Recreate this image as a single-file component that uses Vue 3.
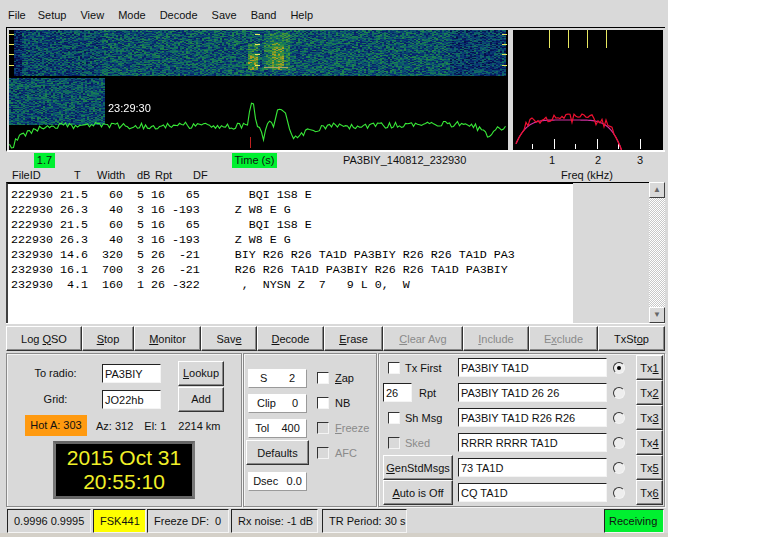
<template>
  <div class="win">
    <div class="menu">
      <span v-for="m in menus" :key="m">{{ m }}</span>
    </div>

    <div class="graphs">
      <div class="wf-wrap">
        <canvas ref="wfRef" width="499" height="120"></canvas>
        <span class="stamp">23:29:30</span>
      </div>
      <canvas ref="specRef" width="150" height="120"></canvas>
    </div>

    <div class="scale-row">
      <span class="green val">1.7</span>
      <span class="green time">Time (s)</span>
      <span class="fname">PA3BIY_140812_232930</span>
      <span class="tick t1">1</span>
      <span class="tick t2">2</span>
      <span class="tick t3">3</span>
    </div>
    <div class="head-row">
      <span style="width:62px">FileID</span>
      <span style="width:23px">T</span>
      <span style="width:40px">Width</span>
      <span style="width:18px">dB</span>
      <span style="width:38px">Rpt</span>
      <span style="width:368px">DF</span>
      <span>Freq (kHz)</span>
    </div>

    <div class="log-row">
      <pre class="log">{{ log }}</pre>
      <div class="log-gap"></div>
      <div class="scroll">
        <div class="sbtn">▲</div>
        <div class="strack"></div>
        <div class="sbtn dim">▼</div>
      </div>
    </div>

    <div class="cmd-row">
      <button v-for="b in commands" :key="b.t" class="btn" :class="{ off: b.off }" :style="{ width: b.w + 'px' }">
        {{ b.t.slice(0, b.u) }}<u>{{ b.t[b.u] }}</u>{{ b.t.slice(b.u + 1) }}
      </button>
    </div>

    <div class="panels">
      <div class="panel p-left">
        <div class="call-grid">
          <label>To radio:</label>
          <div class="field">PA3BIY</div>
          <button class="btn"><u>L</u>ookup</button>
          <label>Grid:</label>
          <div class="field">JO22hb</div>
          <button class="btn">Add</button>
        </div>
        <div class="info">
          <span class="hot">Hot A: 303</span>
          <span class="az">Az: 312</span>
          <span class="el">El: 1</span>
          <span>2214 km</span>
        </div>
        <div class="clock">
          <div>2015 Oct 31</div>
          <div>20:55:10</div>
        </div>
      </div>

      <div class="panel p-mid">
        <div class="mid-col">
          <div class="spin"><span>S</span><span>2</span></div>
          <div class="spin"><span>Clip</span><span>0</span></div>
          <div class="spin"><span>Tol</span><span>400</span></div>
          <button class="btn defaults">Defaults</button>
          <div class="spin dsec"><span>Dsec</span><span>0.0</span></div>
        </div>
        <div class="checks">
          <div class="chk-row"><i class="chk"></i><span><u>Z</u>ap</span></div>
          <div class="chk-row"><i class="chk"></i><span>NB</span></div>
          <div class="chk-row off"><i class="chk"></i><span><u>F</u>reeze</span></div>
          <div class="chk-row off"><i class="chk"></i><span>AFC</span></div>
        </div>
      </div>

      <div class="panel p-right">
        <div class="tx-left">
          <div class="chk-row rowc"><i class="chk"></i><span>Tx First</span></div>
          <div class="rpt"><div class="field small">26</div><span>Rpt</span></div>
          <div class="chk-row rowc"><i class="chk"></i><span>Sh Msg</span></div>
          <div class="chk-row rowc off"><i class="chk"></i><span>Sked</span></div>
          <button class="btn wide"><u>G</u>enStdMsgs</button>
          <button class="btn wide"><u>A</u>uto is Off</button>
        </div>
        <div class="tx-msgs">
          <div v-for="(m, i) in messages" :key="i" class="tx-row">
            <div class="field msg">{{ m }}</div>
            <i class="radio" :class="{ on: i === 0 }"></i>
            <button class="btn txb">Tx<u>{{ i + 1 }}</u></button>
          </div>
        </div>
      </div>
    </div>

    <div class="status">
      <div class="cell" style="width:84px">0.9996 0.9995</div>
      <div class="cell fsk" style="width:53px">FSK441</div>
      <div class="cell freeze" style="width:82px"><span>Freeze DF:</span><span>0</span></div>
      <div class="cell" style="width:87px">Rx noise: -1 dB</div>
      <div class="cell tr" style="width:85px">TR Period: 30 s</div>
      <div class="cell rx">Receiving</div>
    </div>
  </div>
</template>

<script setup>
import { ref, onMounted } from 'vue'

const menus = ['File', 'Setup', 'View', 'Mode', 'Decode', 'Save', 'Band', 'Help']

const commands = [
  { t: 'Log QSO', u: 4, w: 76 },
  { t: 'Stop', u: 0, w: 52 },
  { t: 'Monitor', u: 0, w: 67 },
  { t: 'Save', u: 3, w: 56 },
  { t: 'Decode', u: 0, w: 67 },
  { t: 'Erase', u: 0, w: 59 },
  { t: 'Clear Avg', u: 0, w: 80, off: true },
  { t: 'Include', u: 0, w: 66, off: true },
  { t: 'Exclude', u: 1, w: 69, off: true },
  { t: 'TxStop', u: 4, w: 67 }
]

const messages = [
  'PA3BIY TA1D',
  'PA3BIY TA1D 26 26',
  'PA3BIY TA1D R26 R26',
  'RRRR RRRR TA1D',
  '73 TA1D',
  'CQ TA1D'
]

const log = [
  '222930 21.5   60  5 16   65       BQI 1S8 E',
  '222930 26.3   40  3 16 -193     Z W8 E G',
  '222930 21.5   60  5 16   65       BQI 1S8 E',
  '222930 26.3   40  3 16 -193     Z W8 E G',
  '232930 14.6  320  5 26  -21     BIY R26 R26 TA1D PA3BIY R26 R26 TA1D PA3',
  '232930 16.1  700  3 26  -21     R26 R26 TA1D PA3BIY R26 R26 TA1D PA3BIY',
  '232930  4.1  160  1 26 -322      ,  NYSN Z  7   9 L 0,  W'
].join('\n')

const wfRef = ref(null)
const specRef = ref(null)

// fixed seed so the noise comes out the same on every load
let seed = 4711
function rnd() {
  seed = (seed * 1664525 + 1013904223) % 4294967296
  return seed / 4294967296
}

function heat(v) {
  const stops = [
    [6, 12, 70], [8, 40, 115], [12, 90, 110], [25, 130, 80],
    [80, 150, 50], [185, 160, 30], [225, 110, 20]
  ]
  const p = Math.max(0, Math.min(0.999, v)) * (stops.length - 1)
  const i = Math.floor(p)
  const f = p - i
  const c = stops[i].map((s, k) => Math.round(s + (stops[i + 1][k] - s) * f))
  return `rgb(${c[0]},${c[1]},${c[2]})`
}

function noiseBlock(ctx, x0, y0, w, h, level) {
  for (let y = 0; y < h; y++) {
    for (let x = 0; x < w; x += 2) {
      ctx.fillStyle = heat(level(x0 + x, y0 + y) + (rnd() - 0.5) * 0.44)
      ctx.fillRect(x0 + x, y0 + y, 2, 1)
    }
  }
}

// smooth envelope points of the green trace, in canvas coordinates
const traceKeys = [
  [0, 116], [4, 116], [6, 110], [11, 106], [21, 102], [33, 97], [51, 95], [71, 96], [91, 94],
  [111, 96], [131, 96], [151, 96], [171, 95], [191, 96], [211, 97], [231, 96], [238, 95],
  [239, 90], [241, 73], [244, 74], [247, 96], [251, 98], [254, 110], [257, 95], [261, 90],
  [264, 97], [268, 80], [271, 79], [276, 83], [279, 95], [282, 107], [290, 105], [300, 100],
  [320, 96], [360, 96], [400, 95], [450, 94], [466, 96], [478, 106], [484, 101], [496, 97]
]

function waterfallLevel(x, y) {
  let v = 0.32
  if (x < 12) v = 0.12
  else if (x < 90) v = 0.27
  if (x > 440) v = 0.22
  if (x > 238 && x < 248 && y > 12 && y < 40) v = y > 24 ? 0.66 : 0.48
  if (x > 254 && x < 280 && y > 2 && y < 40) v = x > 262 && x < 274 && y > 12 ? 0.62 : 0.46
  return v
}

function drawWaterfall(ctx) {
  ctx.fillStyle = '#000'
  ctx.fillRect(0, 0, 499, 120)

  noiseBlock(ctx, 5, 0, 491, 46, waterfallLevel)
  noiseBlock(ctx, 0, 48, 96, 47, () => 0.3)

  // yellow tick marks on the left, centre and right
  ctx.fillStyle = '#e8e860'
  for (const y of [4, 14, 24, 35]) {
    ctx.fillRect(0, y, 5, 1)
    ctx.fillRect(246, y, 5, 1)
    ctx.fillRect(493, y, 5, 1)
  }
  ctx.fillStyle = '#b0a060'
  ctx.fillRect(255, 37, 24, 1)

  ctx.strokeStyle = '#38e838'
  ctx.lineWidth = 1.1
  ctx.beginPath()
  let k = 0
  for (let x = 0; x < 497; x += 2) {
    while (k < traceKeys.length - 2 && traceKeys[k + 1][0] < x) k++
    const a = traceKeys[k]
    const b = traceKeys[k + 1]
    const y = a[1] + ((b[1] - a[1]) * (x - a[0])) / (b[0] - a[0])
    const quiet = x > 236 && x < 282
    const jy = y + (quiet ? 0 : (rnd() - 0.5) * 6)
    if (x === 0) ctx.moveTo(x + 0.5, jy)
    else ctx.lineTo(x + 0.5, jy)
  }
  ctx.stroke()

  ctx.fillStyle = '#c02020'
  ctx.fillRect(241, 107, 1, 11)
}

function bell(x) {
  const t = Math.abs(x - 54.5) / 54
  return 90 + 30 * Math.pow(t, 5)
}

function drawSpectrum(ctx) {
  ctx.fillStyle = '#000'
  ctx.fillRect(0, 0, 150, 120)

  ctx.fillStyle = '#e8e860'
  for (const x of [36, 55, 74, 93]) ctx.fillRect(x, 0, 1, 18)

  ctx.fillStyle = '#fff'
  ;[[19, 5], [41, 10], [62, 5], [84, 10], [105, 5], [127, 10]].forEach(([x, h]) => {
    ctx.fillRect(x, 119 - h, 1, h)
  })

  ctx.strokeStyle = '#d030a0'
  ctx.lineWidth = 1.2
  ctx.beginPath()
  for (let x = 3; x <= 110; x++) {
    if (x === 3) ctx.moveTo(x, bell(x))
    else ctx.lineTo(x, bell(x))
  }
  ctx.stroke()

  ctx.strokeStyle = '#f01030'
  ctx.beginPath()
  for (let x = 3; x <= 110; x += 2) {
    const y = bell(x) + (x > 12 && x < 100 ? (rnd() - 0.6) * 10 : 0)
    if (x === 3) ctx.moveTo(x, y)
    else ctx.lineTo(x, y)
  }
  ctx.stroke()
}

onMounted(() => {
  drawWaterfall(wfRef.value.getContext('2d'))
  drawSpectrum(specRef.value.getContext('2d'))
})
</script>

<style scoped>
.win {
  width: 668px;
  height: 537px;
  background: #d9d9d9;
  font: 11px "Liberation Sans", Arial, sans-serif;
  color: #111;
  box-shadow: inset 0 -4px #d4d0c8;
  overflow: hidden;
}

.menu {
  height: 27px;
  padding-left: 8px;
  display: flex;
  align-items: center;
  gap: 14px;
  box-sizing: border-box;
  padding-top: 2px;
}

.menu span:first-child {
  margin-right: -2px;
}

.graphs {
  width: 659px;
  height: 125px;
  margin-left: 6px;
  box-sizing: border-box;
  padding: 2px 2px 0 2px;
  border-top: 1px solid #000;
  border-left: 1px solid #000;
  border-bottom: 2px solid #fff;
  display: flex;
  gap: 5px;
}

.graphs canvas {
  display: block;
}

.wf-wrap {
  position: relative;
  width: 499px;
  height: 120px;
}

.stamp {
  position: absolute;
  left: 99px;
  top: 72px;
  color: #fff;
}

.scale-row {
  position: relative;
  height: 15px;
  line-height: 15px;
}

.scale-row span {
  position: absolute;
  top: 1px;
}

.green {
  background: #00f030;
  text-align: center;
  height: 15px;
}

.val { left: 34px; width: 21px; }
.time { left: 232px; width: 45px; }
.fname { left: 343px; }
.t1 { left: 549px; }
.t2 { left: 595px; }
.t3 { left: 637px; }

.head-row {
  height: 15px;
  line-height: 15px;
  padding: 1px 0 0 12px;
  box-sizing: border-box;
  display: flex;
}

.log-row {
  width: 659px;
  height: 142px;
  margin-left: 6px;
  box-sizing: border-box;
  display: flex;
  border-bottom: 1px solid #fff;
}

.log {
  margin: 0;
  width: 567px;
  box-sizing: border-box;
  padding: 4px 0 0 3px;
  background: #fff;
  border-top: 2px solid #000;
  border-left: 2px solid #404040;
  font: 11.67px/15px "Liberation Mono", "Courier New", monospace;
  color: #000;
}

.log-gap {
  width: 76px;
  border-top: 1px solid #000;
}

.scroll {
  width: 16px;
  display: flex;
  flex-direction: column;
}

.sbtn {
  height: 16px;
  font-size: 8px;
  line-height: 13px;
  text-align: center;
  color: #666;
  box-sizing: border-box;
  background: #d9d9d9;
  border: 1px solid;
  border-color: #fff #404040 #404040 #fff;
}

.strack {
  flex: 1;
  background: repeating-conic-gradient(#fff 0 25%, #c8c8c8 0 50%) 0 0 / 2px 2px;
}

.cmd-row {
  display: flex;
  margin: 2px 0 0 6px;
  height: 25px;
}

.btn {
  font: inherit;
  color: #111;
  background: #d9d9d9;
  padding: 0;
  box-sizing: border-box;
  border: 1px solid;
  border-color: #fff #333 #333 #fff;
  box-shadow: inset -1px -1px #888;
}

.btn.off {
  color: #8a8a8a;
}

.panels {
  display: flex;
  margin: 2px 0 0 6px;
  gap: 1px;
  height: 154px;
}

.panel {
  box-sizing: border-box;
  border: 1px solid #8a8a8a;
  box-shadow: inset 1px 1px #f4f4f4, 1px 1px #f4f4f4;
}

.p-left {
  width: 236px;
  padding-top: 6px;
}

.call-grid {
  display: grid;
  grid-template-columns: 76px 76px 46px;
  grid-auto-rows: 26px;
  column-gap: 0;
  padding-left: 19px;
  align-items: center;
}

.call-grid label {
  text-align: center;
  padding-right: 17px;
}

.call-grid .field {
  width: 59px;
  height: 19px;
}

.call-grid .btn {
  width: 46px;
  height: 25px;
}

.field {
  box-sizing: border-box;
  background: #fff;
  border: 1px solid;
  border-color: #222 #f4f4f4 #f4f4f4 #222;
  padding-left: 2px;
  line-height: 18px;
  white-space: nowrap;
  overflow: hidden;
}

.info {
  display: flex;
  align-items: center;
  margin: 3px 0 0 18px;
  white-space: nowrap;
}

.hot {
  background: #ff9a10;
  width: 62px;
  height: 21px;
  line-height: 21px;
  text-align: center;
  margin-right: 9px;
}

.az { margin-right: 11px; }
.el { margin-right: 12px; }

.clock {
  width: 142px;
  height: 58px;
  box-sizing: border-box;
  margin: 5px 0 0 46px;
  background: #000;
  border: 3px solid;
  border-color: #666 #777 #666 #777;
  color: #f0f028;
  font-size: 21px;
  line-height: 24px;
  text-align: center;
  padding-top: 2px;
}

.p-mid {
  width: 134px;
  display: flex;
  padding: 15px 0 0 2px;
}

.mid-col {
  width: 63px;
  display: flex;
  flex-direction: column;
  align-items: center;
}

.spin {
  width: 59px;
  height: 19px;
  margin-bottom: 6px;
  box-sizing: border-box;
  background: #fff;
  border: 1px solid;
  border-color: #fff #9a9a9a #9a9a9a #fff;
  display: flex;
  justify-content: space-around;
  line-height: 17px;
}

.defaults {
  width: 63px;
  height: 25px;
  margin-top: -4px;
}

.dsec {
  margin-top: 7px;
}

.checks {
  padding: 2px 0 0 8px;
}

.chk-row {
  display: flex;
  align-items: center;
  gap: 6px;
  height: 13px;
  margin-bottom: 12px;
  white-space: nowrap;
}

.chk-row.off {
  color: #8a8a8a;
}

.chk {
  width: 12px;
  height: 12px;
  box-sizing: border-box;
  background: #fff;
  border: 1px solid;
  border-color: #333 #f4f4f4 #f4f4f4 #333;
}

.chk-row.off .chk {
  background: #d9d9d9;
}

.p-right {
  width: 287px;
  display: flex;
  padding: 1px 0 0 4px;
}

.tx-left {
  width: 75px;
}

.rowc {
  height: 25px;
  margin: 0;
  padding-left: 5px;
  gap: 5px;
}

.rpt {
  height: 25px;
  display: flex;
  align-items: center;
  gap: 7px;
}

.field.small {
  width: 29px;
  height: 19px;
}

.btn.wide {
  display: block;
  width: 70px;
  height: 25px;
}

.tx-row {
  display: flex;
  align-items: center;
  height: 25px;
}

.field.msg {
  width: 149px;
  height: 19px;
}

.radio {
  width: 12px;
  height: 12px;
  margin: 0 11px 0 6px;
  border-radius: 50%;
  box-sizing: border-box;
  border: 1px solid;
  border-color: #333 #f4f4f4 #f4f4f4 #333;
  background: #eee;
  display: flex;
  align-items: center;
  justify-content: center;
}

.radio.on::after {
  content: "";
  width: 4px;
  height: 4px;
  border-radius: 50%;
  background: #000;
}

.txb {
  width: 27px;
  height: 25px;
}

.status {
  display: flex;
  margin: 2px 0 0 7px;
  height: 24px;
}

.cell {
  box-sizing: border-box;
  border: 1px solid;
  border-color: #222 #f4f4f4 #f4f4f4 #222;
  padding: 0 0 0 6px;
  line-height: 22px;
  white-space: nowrap;
}

.freeze {
  display: flex;
  justify-content: space-between;
  padding-right: 7px;
  margin-left: 1px;
}

.tr {
  margin-left: 4px;
}

.fsk {
  background: #ffff00;
  margin-left: 2px;
}

.cell:nth-child(4) {
  margin-left: 2px;
}

.rx {
  background: #00f030;
  margin-left: 197px;
  width: 60px;
  padding-left: 4px;
}
</style>

<style>
html, body {
  background: #fff;
}
</style>
